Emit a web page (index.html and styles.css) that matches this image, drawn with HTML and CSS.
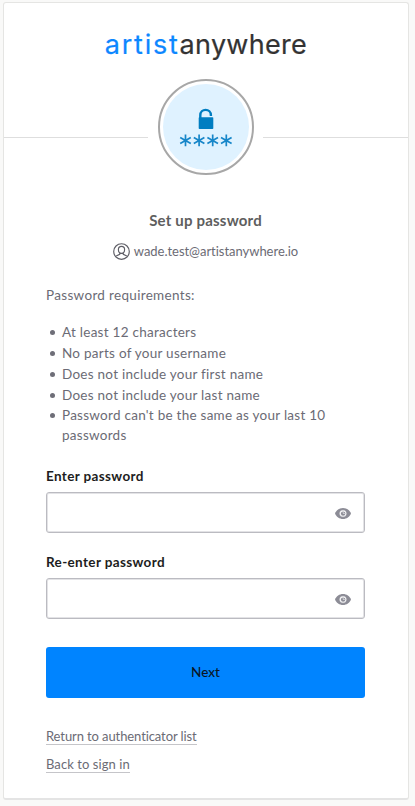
FILE: index.html
```html
<!DOCTYPE html>
<html lang="en">
<head>
<meta charset="utf-8">
<title>Set up password</title>
<link rel="stylesheet" href="styles.css">
</head>
<body>
<svg class="sprite" width="0" height="0" aria-hidden="true">
  <symbol id="eye" viewBox="0 0 16 11">
    <path fill="#8c8c96" d="M8 0C4.400 0 1.300 2.200 0 5.500 1.300 8.800 4.400 11 8 11s6.700-2.200 8-5.500C14.700 2.200 11.600 0 8 0z"/>
    <circle cx="8" cy="5.500" r="3.300" fill="#fff" stroke="#d2d2d7" stroke-width=".5"/>
    <circle cx="8.100" cy="5.600" r="2.200" fill="#8c8c96"/>
    <path d="M8.200 5.500V3.800M8.200 5.500h1.600" stroke="#e2e2e6" stroke-width=".8"/>
  </symbol>
</svg>
<main class="card">
  <header class="header">
    <h1 class="logo"><span class="logo-first">artist</span><span class="logo-second">anywhere</span></h1>
    <div class="divider">
      <span class="line line-start"></span>
      <div class="badge">
        <svg width="86" height="86" viewBox="0 0 86 86" aria-hidden="true">
          <circle cx="43" cy="43" r="43" fill="#dff2ff"/>
          <path d="M37.300 36V31.200a5.300 5.300 0 0 1 10.600 0V32" fill="none" stroke="#007dc1" stroke-width="2.400"/>
          <rect x="35.700" y="33.200" width="14.600" height="11.800" rx=".8" fill="#007dc1"/>
          <g stroke="#1686c9" stroke-width="1.700">
            <path id="star" d="M22.500 50.500v11.800M17.200 53.400l10.600 6M27.800 53.400l-10.600 6"/>
            <use href="#star" x="13.600"/>
            <use href="#star" x="27.200"/>
            <use href="#star" x="40.800"/>
          </g>
        </svg>
      </div>
      <span class="line"></span>
    </div>
  </header>
  <section class="content">
    <h2 class="title">Set up password</h2>
    <div class="identifier">
      <svg width="17" height="17" viewBox="0 0 17 17" fill="none" stroke="#5e5e66" stroke-width="1.150" aria-hidden="true">
        <circle cx="8.500" cy="8.500" r="7.800"/>
        <path d="M8.500 3.300c-2 0-3.100 1.400-3.100 3.200 0 2.100 1.300 3.900 3.100 3.900s3.100-1.800 3.100-3.900c0-1.800-1.100-3.200-3.100-3.200zM6.700 9.800v1.500l-3.500 1.800M10.300 9.800v1.500l3.500 1.800"/>
      </svg>
      <span class="email">wade.test@artistanywhere.io</span>
    </div>
    <p class="intro">Password requirements:</p>
    <ul class="rules">
      <li>At least 12 characters</li>
      <li>No parts of your username</li>
      <li>Does not include your first name</li>
      <li>Does not include your last name</li>
      <li>Password can't be the same as your last 10 passwords</li>
    </ul>
    <form class="form">
      <label class="label" for="password">Enter password</label>
      <div class="field"><input id="password" type="password"><svg class="eye" width="16" height="11"><use href="#eye"/></svg></div>
      <label class="label" for="confirm">Re-enter password</label>
      <div class="field"><input id="confirm" type="password"><svg class="eye" width="16" height="11"><use href="#eye"/></svg></div>
      <button class="next" type="button">Next</button>
    </form>
    <nav class="links">
      <a href="#" class="link-list">Return to authenticator list</a>
      <a href="#" class="link-back">Back to sign in</a>
    </nav>
  </section>
</main>
</body>
</html>
```

FILE: styles.css
```css
* { box-sizing: border-box; }

body {
  margin: 0;
  padding: 2px 6px 6px 3px;
  background: #f9f9f8;
  color: #6b6b75;
  font-family: Lato, "Liberation Sans", sans-serif;
  font-size: 13.5px;
}

.sprite { position: absolute; }

.card {
  height: 798px;
  background: #fff;
  border: 1px solid #e5e5e3;
  border-bottom: 2px solid #e4e4e4;
  border-radius: 3px;
}

.header { padding-top: 22px; }

.logo {
  margin: 0;
  display: flex;
  justify-content: center;
  height: 40px;
  line-height: 40px;
  font-family: Inter, sans-serif;
  font-size: 27px;
  font-weight: 400;
  -webkit-text-stroke: 0.2px currentColor;
}

.logo-first { color: #0d87ff; letter-spacing: 1.75px; }
.logo-second { color: #333; letter-spacing: 0.3px; }

.divider {
  display: flex;
  align-items: center;
  margin-top: 14px;
}

.line {
  flex: 1;
  height: 1px;
  margin-top: 21px;
  background: #dedede;
}

.line-start { flex: 0 0 144px; }

.badge {
  display: grid;
  place-items: center;
  width: 96px;
  height: 96px;
  margin: 0 9px 0 10px;
  border: 2px solid #a7a7a7;
  border-radius: 50%;
}

.content { padding: 36px 43px 0 42px; }

.title {
  margin: 0;
  color: #5e5e5e;
  font-size: 15px;
  font-weight: 700;
  line-height: 18px;
  letter-spacing: 0.2px;
  text-align: center;
}

.identifier {
  display: flex;
  align-items: center;
  justify-content: center;
  gap: 4px;
  height: 18px;
  margin-top: 13px;
}

.email { font-size: 13px; letter-spacing: -0.03px; }

.intro {
  margin: 25px 0 17px;
  line-height: 20px;
  letter-spacing: 0.32px;
}

.rules {
  margin: 0;
  padding: 0;
  list-style: none;
  line-height: 20px;
  letter-spacing: 0.26px;
}

.rules li {
  display: grid;
  grid-template-columns: 5px 1fr;
  column-gap: 7px;
  padding-left: 4px;
}

.rules li::before {
  content: "";
  width: 5px;
  height: 5px;
  margin-top: 8px;
  border-radius: 50%;
  background: #6e6e78;
}

.rules li + li { margin-top: 0.85px; }

.label {
  display: block;
  color: #1d1d21;
  font-size: 13.5px;
  font-weight: 700;
  line-height: 18px;
  letter-spacing: 0.36px;
}

.form { padding-top: 22px; }

.field {
  display: flex;
  align-items: center;
  height: 41px;
  margin: 6.5px 0 20.5px;
  padding-right: 13px;
  border: 1px solid #bbbbc1;
  border-radius: 3px;
  box-shadow: inset 0 0 0 1px #e3e3e6;
}

.field input {
  flex: 1;
  min-width: 0;
  height: 100%;
  border: 0;
  background: none;
  outline: none;
}

.eye { margin-top: 3px; }

.next {
  display: block;
  width: 100%;
  height: 51px;
  margin-top: 28px;
  border: 0;
  border-radius: 3px;
  background: #0084ff;
  color: #0b1624;
  font: 500 13.5px Lato, sans-serif;
}

.links {
  display: flex;
  flex-direction: column;
  align-items: flex-start;
  gap: 12px;
  margin-top: 31px;
}

.links a {
  color: #6b6b75;
  font-size: 13px;
  line-height: 15px;
  border-bottom: 1px solid #c5c5c9;
  text-decoration: none;
}

.link-list { letter-spacing: -0.1px; }
.link-back { letter-spacing: 0.07px; }
```
